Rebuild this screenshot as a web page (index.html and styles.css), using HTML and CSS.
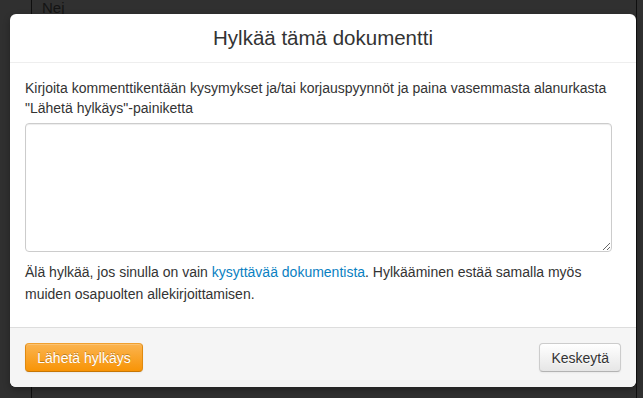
FILE: index.html
```html
<!DOCTYPE html>
<html lang="fi">
<head>
    <meta charset="UTF-8">
    <meta name="viewport" content="width=device-width, initial-scale=1.0">
    <title>Hylkää tämä dokumentti</title>
    <link rel="stylesheet" href="styles.css">
</head>
<body>
    <div class="page">
        <div class="page-col">Nej</div>
    </div>

    <div class="modal">
        <div class="modal-header">
            <h3>Hylkää tämä dokumentti</h3>
        </div>
        <div class="modal-body">
            <p class="intro">Kirjoita kommenttikentään kysymykset ja/tai korjauspyynnöt ja paina vasemmasta alanurkasta "Lähetä hylkäys"-painiketta</p>
            <textarea class="comment"></textarea>
            <p class="note">Älä hylkää, jos sinulla on vain <a href="#">kysyttävää dokumentista</a>. Hylkääminen estää samalla myös muiden osapuolten allekirjoittamisen.</p>
        </div>
        <div class="modal-footer">
            <button class="btn btn-warning">Lähetä hylkäys</button>
            <button class="btn">Keskeytä</button>
        </div>
    </div>
</body>
</html>
```

FILE: styles.css
```css
body {
    margin: 0;
    font-family: "Liberation Sans", Arial, sans-serif;
    font-size: 14px;
    color: #333;
    background-color: #303030;
    overflow: hidden;
}
.page {
    height: 398px;
    padding-left: 31px;
}
.page-col {
    width: 584px;
    height: 100%;
    border-left: 1px solid #0f0f0f;
    border-right: 1px solid #0f0f0f;
    padding: 0 10px;
    line-height: 16px;
    color: #141414;
    font-size: 15px;
}
.modal {
    position: absolute;
    left: 10px;
    top: 14px;
    width: 626px;
    height: 373px;
    background: #fff;
    border-radius: 6px;
    box-shadow: 0 3px 7px rgba(0,0,0,0.3);
    display: flex;
    flex-direction: column;
    overflow: hidden;
}
.modal-header {
    height: 48px;
    border-bottom: 1px solid #eee;
    display: flex;
    align-items: center;
    justify-content: center;
}
.modal-header h3 {
    margin: 0;
    font-size: 20.5px;
    font-weight: normal;
    color: #333;
    line-height: 30px;
}
.modal-body {
    flex: 1;
    padding: 15px 15px 0;
}
.intro {
    margin: 0 0 5px;
    line-height: 20px;
}
.comment {
    display: block;
    box-sizing: border-box;
    width: 587px;
    height: 129px;
    border: 1px solid #ccc;
    border-radius: 4px;
    box-shadow: inset 0 1px 1px rgba(0,0,0,0.075);
    margin: 0;
}
.note {
    margin: 9px 0 0;
    line-height: 22px;
}
.note a {
    color: #0a7fc2;
    text-decoration: none;
}
.modal-footer {
    height: 29px;
    padding: 15px;
    background: #f5f5f5;
    border-top: 1px solid #ddd;
    display: flex;
    justify-content: space-between;
}
.btn {
    height: 29px;
    padding: 0 11px;
    font-family: "Liberation Sans", Arial, sans-serif;
    font-size: 14px;
    color: #333;
    text-shadow: 0 1px 1px rgba(255,255,255,0.75);
    background-image: linear-gradient(to bottom, #fff, #e6e6e6);
    border: 1px solid #ccc;
    border-bottom-color: #b3b3b3;
    border-radius: 4px;
    box-shadow: inset 0 1px 0 rgba(255,255,255,0.2), 0 1px 2px rgba(0,0,0,0.05);
    cursor: pointer;
}
.btn-warning {
    width: 118px;
    color: #fff;
    text-shadow: 0 -1px 0 rgba(0,0,0,0.25);
    background-image: linear-gradient(to bottom, #fbb450, #f89406);
    border-color: #f0a030 #e08a10 #c67605;
}
```
